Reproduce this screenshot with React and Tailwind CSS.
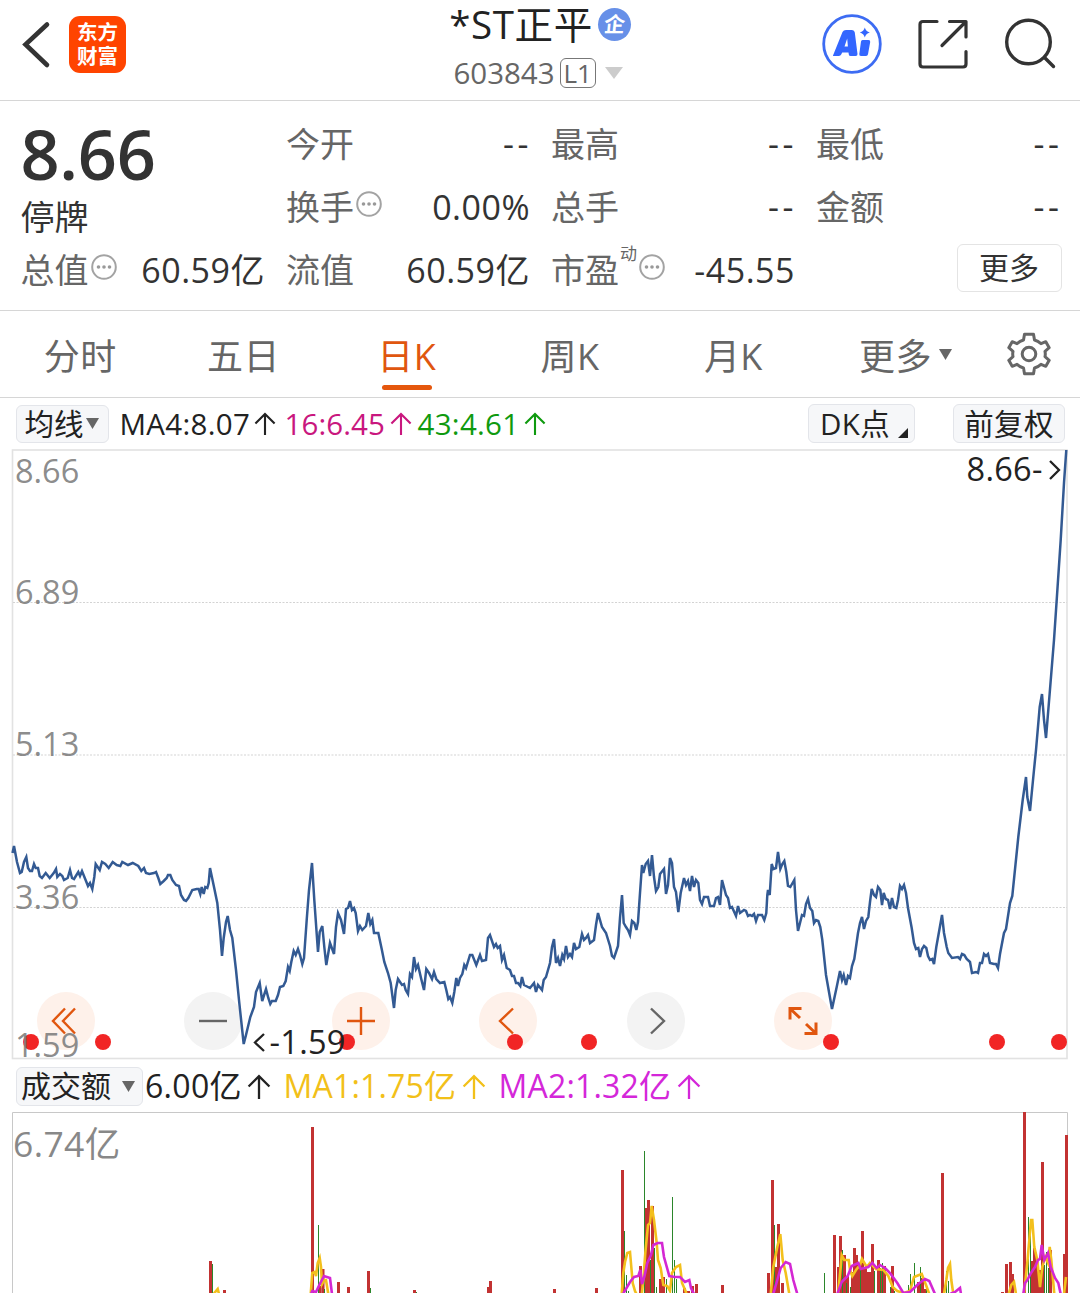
// =============================================================================
// Stock detail page - quote header, daily K chart, turnover chart
// =============================================================================
import React from 'react';

const PRICE_POINTS = `
12.5,853 14,846 17,862 20,873 21.7,872 24,862 26.3,857 28,868 30,871 32,871 34,864 35.7,868 38,868 39.7,876 42,878
45.7,873 49.7,878 53.7,873 56,869 57.3,877 60,874 62.3,876 64,880 67.7,878 70,870 72,878 74,879 78.3,872 80,876
82,871 86,881 88,886 90,883 92.3,889 94.3,877 95.7,864 99.7,870 102,862 105.3,864 108.7,868 112.7,862 116.7,865
120.3,866 122.3,862 128,865 132.7,863 138.3,866 141.3,871 144,868 146,873 149.3,874 154,873 156,872 158.3,878
160.3,884 163.7,881 166.7,878 168,875 170.3,875 172.3,880 176,885 179,886 181,895 184,900 186,901 188.3,898
192.3,890 196.7,889 198.7,889 200.3,894 201.7,887 203.7,894 205.3,887 207.3,888 208.7,883 210,868 214,887
217.3,903 220,930 222,956 223.7,938 226,922 227.7,916 230,930 232.3,938 236,970 239.3,1003 243.7,1044 246,1035
250.3,1017 254,1007 256,992 259.7,983 262.2,1001 266,989 268.3,998 270.3,1004 272,1001 275.7,1001 278,995 280,987
283.3,986 285.7,981 288,967 289.7,971 291.3,962 293.7,951 295.7,955 298,949 300,955 302.3,964 304,958 306.7,920
309,890 312,863 314.3,900 318,952 319.7,932 322.3,926 324.3,947 326.3,965 330,943 334,954 336,927 338,913 341,920
344,934 346,909 348,908 350,901 352,910 354,908 355.7,913 358,931 360,926 362.3,930 366,926 368.3,913 370.3,924
372.3,920 374,933 378.3,933 381.7,949 384.3,962 388,973 390.7,983 394,1008 395.7,990 398,979 402,985 404,984
405.7,990 408,994 410,974 412,977 414,957 416,969 418,965 421,978 424,990 426.3,969 429,973 432,979 434,972
436.3,979 440,983 444.3,982 446.3,990 448.3,999 450,997 452.3,1003 454.3,992 456.3,978 458,986 460,978 462.3,974
464.3,965 466,968 470,955 472.3,955 476.3,965 480,955 482,961 486,960 488,938 490,935 494,947 496,944 497.7,948
500,946 502,960 504,955 506.7,968 510,970 512,976 514,976 516,983 518,983 520.3,986 522,977 524,985 530,988
534,983 536,992 538,985 542,990 543.7,980 546,977 550,963 552,947 554,939 556,963 558,958 560,966 562.3,955
564,959 566,946 568,957 570,954 572,957 574,943 576,949 579.3,947 582,934 584,940 586,938 588,935 590,943 594,940
596,925 598,913 602,927 606,933 610,946 612,956 614,958 616,952 618,946 620,918 622,895 623.7,923 626,927 628,930
630,935 632,921 634.3,923 636.3,930 638,922 640,893 642,865 643.3,873 645.7,864 648,861 650,876 652,855 654,877
656,891 658.3,887 660,874 664,869 666,894 668,885 670,858 672,863 674,887 676,892 678.3,912 680.7,893 684,878
686,885 688,881 690,891 692,876 694,887 696,880 698.3,883 700,900 702,904 704,897 708,897 710,906 714,906 716,898
718,897 720,905 722,880 726,895 728,898 730,908 732,907 736,916 738,906 740,913 744,910 746,911 748,916 750,915
752,916 754,914 756,921 758,915 762,915 764.3,920 766.3,913 767.3,895 768,890 769.7,895 771.7,864 773.3,869
776,868 778,852 780.3,869 782.3,864 784.3,861 786.3,872 788,886 790.3,887 794.3,880 796,910 798,931 802,915
804,916 806,904 808,899 810,908 812.3,911 814,923 816,920 818.3,921 820.3,927 822.3,940 826,975 832,1009
836.7,987 840,971 842,980 843.7,975 846,985 848,976 850,978 852,966 854.3,959 858,933 860,923 862,917 864,929
866,921 868.3,917 870,902 871.7,889 874,895 876,897 878,887 880.3,890 882,905 883.7,893 885.7,899 888,900 890,909
892,898 894,907 896.3,908 898,900 900,886 902,889 904,885 906,893 908,908 911.7,928 914,943 916,949 918.3,948
920,957 922,949 924,946 926.3,948 928,956 930,960 932.3,959 934,964 936.3,947 942,915 944,933 946.7,947 948.3,953
952,958 958,957 960,959 962,954 964.3,955 966.7,959 970,962 972,973 976,972 978,973 980,963 982,963 984,954
986,956 988,954 990,963 994,964 996,964 998,968 1000,954 1004,933 1006,929 1010,903 1012.3,896 1018.3,837
1022.7,800 1026,777 1027.3,797 1030,811 1033.7,773 1036,750 1039.7,707 1042,694 1044,720 1046,738 1049.7,693
1054,640 1056.7,600 1060.7,540 1064,483 1066.3,450`;

// [x center, top]
const RED_BARS = [
  [210.5, 1261], [224.5, 1290], [312.5, 1127], [323, 1269], [320, 1286], [338.5, 1282], [348.5, 1287], [368.5, 1271],
  [414.5, 1290], [488.5, 1287], [490.5, 1281], [554.5, 1289], [596.5, 1288], [622.5, 1170], [640.5, 1266],
  [646.5, 1208], [648.5, 1200], [652.5, 1206], [660.5, 1279], [663.5, 1277], [684.5, 1288], [688.5, 1291],
  [692.5, 1286], [696.5, 1284], [722.5, 1285], [768.5, 1273], [772.5, 1180], [776.5, 1267], [778.5, 1224],
  [782.5, 1283], [834.5, 1235], [838.5, 1267], [840.5, 1236], [844.5, 1255], [847.5, 1276], [852.5, 1272], [854.5, 1248],
  [856.5, 1255], [859.5, 1268], [862.5, 1231], [865.5, 1268], [868.5, 1272], [870.5, 1272], [872.5, 1244],
  [878.5, 1260], [881.5, 1270], [884.5, 1266], [892.5, 1266], [918.5, 1282], [922.5, 1278], [924.5, 1289],
  [942.5, 1173], [1002.5, 1292], [1006.5, 1264], [1010.5, 1262], [1012.5, 1274], [1024.5, 1112],
  [1032.5, 1261], [1034.5, 1248], [1036.5, 1260], [1039.5, 1270], [1042.5, 1162], [1050.5, 1250], [1064.5, 1254], [1066.5, 1135],
];

const GREEN_BARS = [
  [212.5, 1264], [318.5, 1225], [324.5, 1289], [370.5, 1288], [416.5, 1292], [624.5, 1231], [626.5, 1275], [628.5, 1291],
  [644.5, 1151], [650.5, 1260], [654.5, 1248], [656.5, 1287], [666.5, 1279], [672.5, 1197], [674.5, 1260],
  [676.5, 1279], [774.5, 1225], [824.5, 1273], [842.5, 1250], [846.5, 1283], [850.5, 1287], [860.5, 1270], [874.5, 1271],
  [882.5, 1263], [880.5, 1268], [890.5, 1287], [894.5, 1291], [908.5, 1285], [910.5, 1274], [914.5, 1263], [920.5, 1267], [926.5, 1285], [928.5, 1290],
  [946.5, 1271], [948.5, 1281], [1028.5, 1217], [1030.5, 1235], [1044.5, 1265], [1046.5, 1252], [1048.5, 1268],
];

const MA1_LINES = [
  '213.5,1294 217.7,1289 219,1294',
  '310.7,1294 312.3,1273 314.7,1272 316,1276 317.7,1263 319.7,1258 321,1267 322,1284 324.3,1280 326,1280 328.3,1294',
  '621.7,1294 623.3,1273 625,1262 627.3,1253 630,1252 631.3,1267 632.7,1283 635,1291 637,1295',
  '641.7,1295 643.3,1280 645.3,1253 648,1225 650,1223 651.7,1206 654,1220 656.7,1243 658,1260 660.7,1268 663.3,1285 667.3,1286 670,1291 672,1273 676,1267 680,1265 682,1283 684.7,1289 687,1295',
  '770.7,1294 773.3,1267 777.3,1247 780.3,1234 782.7,1260 785.7,1273 789.3,1294',
  '838,1294 840.7,1267 841.7,1255 844.3,1260 848.7,1260 850,1270 852.3,1276 856,1270 860,1265 862,1259 866.7,1267 870,1263 876,1269 883.3,1270 888.3,1276 892.7,1287 897.3,1291 903.3,1293 910,1291 914,1277 921.7,1274 926,1285 929.3,1294',
  '944,1294 946.3,1280 948,1268 950,1264 951.3,1280 953.3,1294',
  '1008.7,1294 1011.3,1285 1014,1282 1016,1294',
  '1024,1294 1027.3,1263 1029.3,1240 1031,1220 1032.3,1220 1034.3,1247 1037.3,1260 1040,1287 1042.3,1267 1045.3,1257 1048,1263 1049.7,1247 1051.3,1260 1054.3,1294',
  '1064,1294 1066,1277',
];

const MA2_LINES = [
  '311,1294 312.3,1291 316,1292 319.3,1285 324,1276 330,1278 332,1294',
  '623,1294 630,1282 634,1277 638.3,1276 640.3,1270 642,1284 644.3,1277 647.3,1263 651,1255 653.3,1245 657.7,1243 662,1243 664,1257 669.3,1276 675,1277 680,1277 685,1282 689.3,1280 691,1288 694,1294',
  '773.3,1294 777.3,1280 780.7,1268 785.7,1262 790,1264 793.3,1280 797.3,1294',
  '837.3,1294 841.7,1282 847.7,1276 851.7,1266 858.3,1263 860.7,1269 868.3,1267 872.3,1263 876.7,1268 880,1265 885,1268 890,1273 897.3,1283 903.3,1293 910,1292 918.3,1284 925,1279 929.3,1281 935,1294',
  '950,1294 955,1292 960,1288 961,1294',
  '1023.3,1294 1025,1283 1027.3,1280 1031,1273 1035,1267 1038,1260 1040,1259 1041.7,1245 1044.3,1260 1048,1253 1050.7,1267 1055,1278 1058.3,1283 1060.7,1294',
];

const EVENT_DOTS = [31, 103, 347, 515, 589, 831, 997, 1059];

const App = () => {
  return (
    <div className="flex h-[1293px] w-[1080px] flex-col overflow-hidden bg-white font-['Open_Sans','Noto_Sans_CJK_SC',sans-serif] text-[#333]">
      <Header />
      <QuotePanel />
      <PeriodTabs />
      <MaBar />
      <PriceChart />
      <VolumeBar />
      <VolumeChart />
    </div>
  );
};

// =============================================================================
// Header
// =============================================================================
const Header = () => (
  <header className="flex h-[101px] shrink-0 justify-between border-b border-[#d6d6d6]">
    <div className="flex w-[400px] pt-4 pl-[21px]">
      <svg className="mt-[4px] h-[50px] w-[30px]" viewBox="0 0 30 50" fill="none">
        <path d="M26 4.5 4.5 24.5 26 45" stroke="#333" strokeWidth="4.6" strokeLinecap="round" />
      </svg>
      <div className="ml-[18px] h-[57px] w-[57px] rounded-[11px] bg-[#ff4400] pt-[4px] text-center text-[20.5px] leading-[24px] font-bold text-white">
        <div>东方</div>
        <div>财富</div>
      </div>
    </div>

    <div className="flex flex-col items-center">
      <div className="flex h-[48px] items-center">
        <span className="text-[38.5px] leading-[48px] tracking-[0.6px] text-[#222]">*ST正平</span>
        <span className="ml-[5px] flex h-[33px] w-[33px] items-center justify-center rounded-full bg-[#6790e8] text-[21px] leading-none font-bold text-white">
          <span className="-skew-x-6">企</span>
        </span>
      </div>
      <div className="mr-[4px] flex h-[50px] items-center">
        <span className="text-[29.5px] leading-[50px] text-[#666]">603843</span>
        <span className="ml-[5px] flex h-[30px] w-[36px] items-center justify-center rounded-[6px] border-[1.5px] border-[#777] text-[26px] leading-none text-[#666]">L1</span>
        <svg className="ml-[9px] h-3 w-[18px]" viewBox="0 0 18 12"><path d="M0 0h18L9 12z" fill="#ccc" /></svg>
      </div>
    </div>

    <div className="flex w-[400px] justify-end pt-[14px] pr-[23px]">
      <svg className="h-[60px] w-[60px]" viewBox="822 14 60 60" fill="none">
        <circle cx="852" cy="44" r="28.3" stroke="#3d6cf3" strokeWidth="2.8" />
        <path fillRule="evenodd" d="M833 55.5 842.5 32q1-2 3.500-2h6q2.500 0 2.800 2.500L857.500 54q.2 2-1.800 2h-5q-1.700 0-1.900-1.600l-.3-2h-6.300l-1 2.200q-.6 1.400-2.300 1.400h-4.700q-1.700 0-1.200-.500zM844.500 46.500h3.400l-.7-8z" fill="#3366ff" />
        <path d="M862.500 40h6q2 0 1.700 2L868 54.300q-.3 1.700-2 1.700h-5q-2 0-1.700-2l1.700-12.500q.2-1.500 1.500-1.500z" fill="#3366ff" />
        <path d="M864.800 27.500q1 4 5 5-4 1-5 5-1-4-5-5 4-1 5-5z" fill="#3366ff" />
      </svg>
      <svg className="ml-[34px] h-[60px] w-[54px]" viewBox="916 14 54 60" fill="none" stroke="#333" strokeWidth="3.200" strokeLinecap="round" strokeLinejoin="round">
        <path d="M937 21.500h-14q-3 0-3 3V64q0 3 3 3h40q3 0 3-3V51.500M949.500 21.500H966v15.500M965 22.500 942 45.500" />
      </svg>
      <svg className="ml-[33px] h-[60px] w-[54px]" viewBox="1003 14 54 60" fill="none" stroke="#333" strokeWidth="3.400" strokeLinecap="round">
        <circle cx="1028.500" cy="42" r="21.800" />
        <path d="M1044.500 57.500 1053.500 66.500" />
      </svg>
    </div>
  </header>
);

// =============================================================================
// Quote panel
// =============================================================================
const MoreDots = () => (
  <svg className="mt-[-7px] ml-[2px] h-[26px] w-[26px]" viewBox="0 0 26 26" fill="none">
    <circle cx="13" cy="13" r="11.8" stroke="#a3a3a3" strokeWidth="2" />
    <circle cx="7.500" cy="13" r="1.800" fill="#999" />
    <circle cx="13" cy="13" r="1.800" fill="#999" />
    <circle cx="18.500" cy="13" r="1.800" fill="#999" />
  </svg>
);

const QuoteCell = ({ label, value, sup, dots }) => (
  <div className="flex h-[63px] items-center justify-between text-[34px] leading-[63px] whitespace-nowrap">
    <span className="flex items-center text-[#666]">
      {label}
      {sup && <span className="mt-[-34px] ml-px text-[17px] leading-none">{sup}</span>}
      {dots && <MoreDots />}
    </span>
    <span className={value === '--' ? 'mt-[-2px] mr-[-2px] tracking-[3.5px]' : 'tracking-[0.5px]'}>{value}</span>
  </div>
);

const QuotePanel = () => (
  <section className="grid h-[210px] shrink-0 grid-cols-[244.500px_244px_244px_244.500px] gap-x-[21px] border-b border-[#d6d6d6] pt-[12px] pl-[20.500px]">
    <div>
      <div className="h-[81px] text-[68.5px] leading-[81px] font-semibold tracking-[-0.3px]">8.66</div>
      <div className="h-[45px] text-[34px] leading-[47px]">停牌</div>
      <QuoteCell label="总值" value="60.59亿" dots />
    </div>
    <div>
      <QuoteCell label="今开" value="--" />
      <QuoteCell label="换手" value="0.00%" dots />
      <QuoteCell label="流值" value="60.59亿" />
    </div>
    <div>
      <QuoteCell label="最高" value="--" />
      <QuoteCell label="总手" value="--" />
      <QuoteCell label="市盈" sup="动" value="-45.55" dots />
    </div>
    <div>
      <QuoteCell label="最低" value="--" />
      <QuoteCell label="金额" value="--" />
      <div className="mr-[-1px] flex h-[58px] items-center justify-end">
        <button className="h-[48px] w-[105px] rounded-[6px] border-[1.5px] border-[#e4e4e4] text-[30px] leading-[44px]">更多</button>
      </div>
    </div>
  </section>
);

// =============================================================================
// Period tabs
// =============================================================================
const TABS = ['分时', '五日', '日K', '周K', '月K'];

const PeriodTabs = () => (
  <nav className="flex h-[87px] shrink-0 border-b border-[#d6d6d6] text-[36px] text-[#666]">
    {TABS.map((tab) => (
      <div
        key={tab}
        className={`flex w-[163.300px] flex-col items-center pr-[3px] ${tab === '日K' ? 'text-[#e0560f]' : ''}`}
      >
        <span className="h-[74px] leading-[91px] tracking-[0.4px]">{tab}</span>
        {tab === '日K' && <span className="h-[5px] w-[50px] rounded-full bg-[#e5570d]" />}
      </div>
    ))}
    <div className="flex h-[87px] w-[178px] items-start justify-center">
      <span className="h-[74px] leading-[91px] tracking-[0.4px]">更多</span>
      <svg className="mt-[38px] ml-[7px] h-[11px] w-[13px]" viewBox="0 0 13 11"><path d="M0 0h13L6.500 11z" fill="#666" /></svg>
    </div>
    <svg className="mt-[21px] ml-[12.500px] h-[44px] w-[44px]" viewBox="-22 -22 44 44" fill="none" stroke="#666" strokeWidth="3" strokeLinejoin="round">
      <path d="M-4.500-19.800H4.500L5.500-14Q9-13 12-10.300L16.800-12.300 20.200-6.300 16-2.700Q16.600 0 16 2.700L20.200 6.300 16.800 12.300 12 10.300Q9 13 5.500 14L4.500 19.800H-4.500L-5.500 14Q-9 13-12 10.300L-16.800 12.300-20.200 6.300-16 2.700Q-16.600 0-16-2.700L-20.200-6.300-16.800-12.300-12-10.300Q-9-13-5.500-14Z" />
      <circle r="6.800" />
    </svg>
  </nav>
);

// =============================================================================
// Indicator bars
// =============================================================================
const UpArrow = ({ className }) => (
  <svg className={`shrink-0 ${className}`} viewBox="0 0 22 24" fill="none" stroke="currentColor" strokeWidth="2.200">
    <path d="M11 24V2M1 12 11 2 21 12" />
  </svg>
);

const DownTriangle = () => (
  <svg className="h-[11px] w-[13px]" viewBox="0 0 13 11"><path d="M0 0h13L6.500 11z" fill="#666" /></svg>
);

const MA_ARROW = 'ml-auto h-[23px] w-[22px]';
const VOLUME_ARROW = 'ml-auto h-[25px] w-[24px]';

const MaBar = () => (
  <div className="flex h-[51px] shrink-0 items-center pl-4 text-[29.500px] text-[#222]">
    <button className="flex h-[38px] w-[93px] items-center justify-center gap-[2px] rounded-[6px] border-[1.5px] border-[#e3e5ea] bg-[#f6f7f9] pr-[2px] leading-[36px]">
      均线
      <DownTriangle />
    </button>
    <span className="ml-[10.500px] flex w-[156px] items-center leading-[52px] tracking-[0.3px] whitespace-nowrap">MA4:8.07<UpArrow className={MA_ARROW} /></span>
    <span className="ml-[9px] flex w-[127px] items-center leading-[52px] tracking-[0.1px] whitespace-nowrap text-[#c9177e]">16:6.45<UpArrow className={MA_ARROW} /></span>
    <span className="ml-[6px] flex w-[128px] items-center leading-[52px] tracking-[0.3px] whitespace-nowrap text-[#0f9a0f]">43:4.61<UpArrow className={MA_ARROW} /></span>
    <button className="ml-auto flex h-[39px] w-[107px] items-center rounded-[6px] border-[1.5px] border-[#e3e5ea] bg-[#f6f7f9] pl-[11px] leading-[36px] tracking-[0.4px]">
      DK点
      <svg className="mt-[18px] ml-[8px] h-[10px] w-[10px]" viewBox="0 0 10 10"><path d="M10 0v10H0z" fill="#222" /></svg>
    </button>
    <button className="mr-[15px] ml-[38px] h-[39px] w-[112px] rounded-[6px] border-[1.5px] border-[#e3e5ea] bg-[#f6f7f9] leading-[36px] tracking-[0.3px]">
      前复权
    </button>
  </div>
);

const VolumeBar = () => (
  <div className="flex h-[52px] shrink-0 items-center pl-4 text-[32px] text-[#222]">
    <button className="flex h-[39px] w-[127px] items-center gap-[11px] rounded-[6px] border-[1.5px] border-[#e3e5ea] bg-[#f6f7f9] pl-[4px] text-[30px] leading-[38px]">
      成交额
      <DownTriangle />
    </button>
    <span className="ml-[2px] flex w-[126px] items-center leading-[50px] tracking-[0.3px] whitespace-nowrap">6.00亿<UpArrow className={VOLUME_ARROW} /></span>
    <span className="ml-[12.500px] flex w-[202px] items-center leading-[50px] tracking-[0.2px] whitespace-nowrap text-[#f2c019]">MA1:1.75亿<UpArrow className={VOLUME_ARROW} /></span>
    <span className="ml-[13px] flex w-[202px] items-center leading-[50px] tracking-[0.2px] whitespace-nowrap text-[#d427d9]">MA2:1.32亿<UpArrow className={VOLUME_ARROW} /></span>
  </div>
);

// =============================================================================
// Price chart
// =============================================================================
const CONTROLS = [
  { id: 'first', active: true, d: 'M-1-12.500-13 0-1 12.500M9-12.500-3 0 9 12.500' },
  { id: 'minus', active: false, d: 'M-14 0H14' },
  { id: 'plus', active: true, d: 'M-14 0H14M0-14V14' },
  { id: 'prev', active: true, d: 'M5-12.500-8 0 5 12.500' },
  { id: 'next', active: false, d: 'M-5-12.500 8 0-5 12.500' },
  { id: 'full', active: true, d: 'M-13-1.500V-12.500H-1.500M-12.500-12-3-3M13 1.500V12.500H1.500M12.500 12 3 3' },
];

const PriceChart = () => (
  <section className="relative h-[611px] shrink-0">
    <div className="absolute top-[543px] left-[37px] flex w-[795px] justify-between">
      {CONTROLS.map((c) => (
        <button key={c.id} className={`h-[58px] w-[58px] rounded-full ${c.active ? 'bg-[#fef1ea]' : 'bg-[#f3f3f3]'}`}>
          <svg className="h-[58px] w-[58px]" viewBox="-29 -29 58 58" fill="none" stroke={c.active ? '#e0560f' : '#666'} strokeWidth={c.id === 'full' ? 3 : 2.4}>
            <path d={c.d} />
          </svg>
        </button>
      ))}
    </div>
    <svg className="pointer-events-none relative block h-[611px] w-[1080px]" viewBox="0 449 1080 611" fill="none">
      <rect x="12.500" y="450" width="1054.500" height="608.500" stroke="#e2e2e2" strokeWidth="1.600" />
      {[602.5, 755, 907.5].map((y) => (
        <path key={y} d={`M13 ${y}H1067`} stroke="#d3d3d3" strokeDasharray="2 1.500" />
      ))}
      {EVENT_DOTS.map((x) => (
        <circle key={x} cx={x} cy="1042" r="8" fill="#f12525" />
      ))}
      <polyline points={PRICE_POINTS} stroke="#335a93" strokeWidth="2.500" />
      <g fontSize="32.500" fill="#7d7d7d" fillOpacity="0.900">
        <text x="15" y="482.500">8.66</text>
        <text x="15" y="603.500">6.89</text>
        <text x="15" y="756">5.13</text>
        <text x="15" y="908.500">3.36</text>
        <text x="15" y="1056.500">1.59</text>
      </g>
      <g fontSize="32.500" fill="#222">
        <text x="966.500" y="480.500" letterSpacing="0.300">8.66-</text>
        <text x="269.500" y="1053.500" letterSpacing="0.300">-1.59</text>
      </g>
      <path d="M1050 461 1059 470 1050 479M264 1034 255 1042.500 264 1051" stroke="#222" strokeWidth="2.300" />
    </svg>
  </section>
);

// =============================================================================
// Turnover chart
// =============================================================================
const VolumeChart = () => (
  <svg className="block h-[181px] w-[1080px] shrink-0" viewBox="0 1112 1080 181" fill="none">
    <path d="M12.500 1293V1112.500H1067.500V1293" stroke="#c8c8c8" />
    {RED_BARS.map(([x, y]) => (
      <rect key={x} x={x - 1.5} y={y} width="3" height={1293 - y} fill="#c23232" />
    ))}
    {GREEN_BARS.map(([x, y]) => (
      <rect key={x} x={x - 0.5} y={y} width="1" height={1293 - y} fill="#2b862b" />
    ))}
    {MA1_LINES.map((points) => (
      <polyline key={points} points={points} stroke="#f3c01c" strokeWidth="2.600" />
    ))}
    {MA2_LINES.map((points) => (
      <polyline key={points} points={points} stroke="#d427d3" strokeWidth="2.600" />
    ))}
    <text x="13" y="1156.500" fontSize="35.500" letterSpacing="0.400" fill="#888">6.74亿</text>
  </svg>
);

export default App;
